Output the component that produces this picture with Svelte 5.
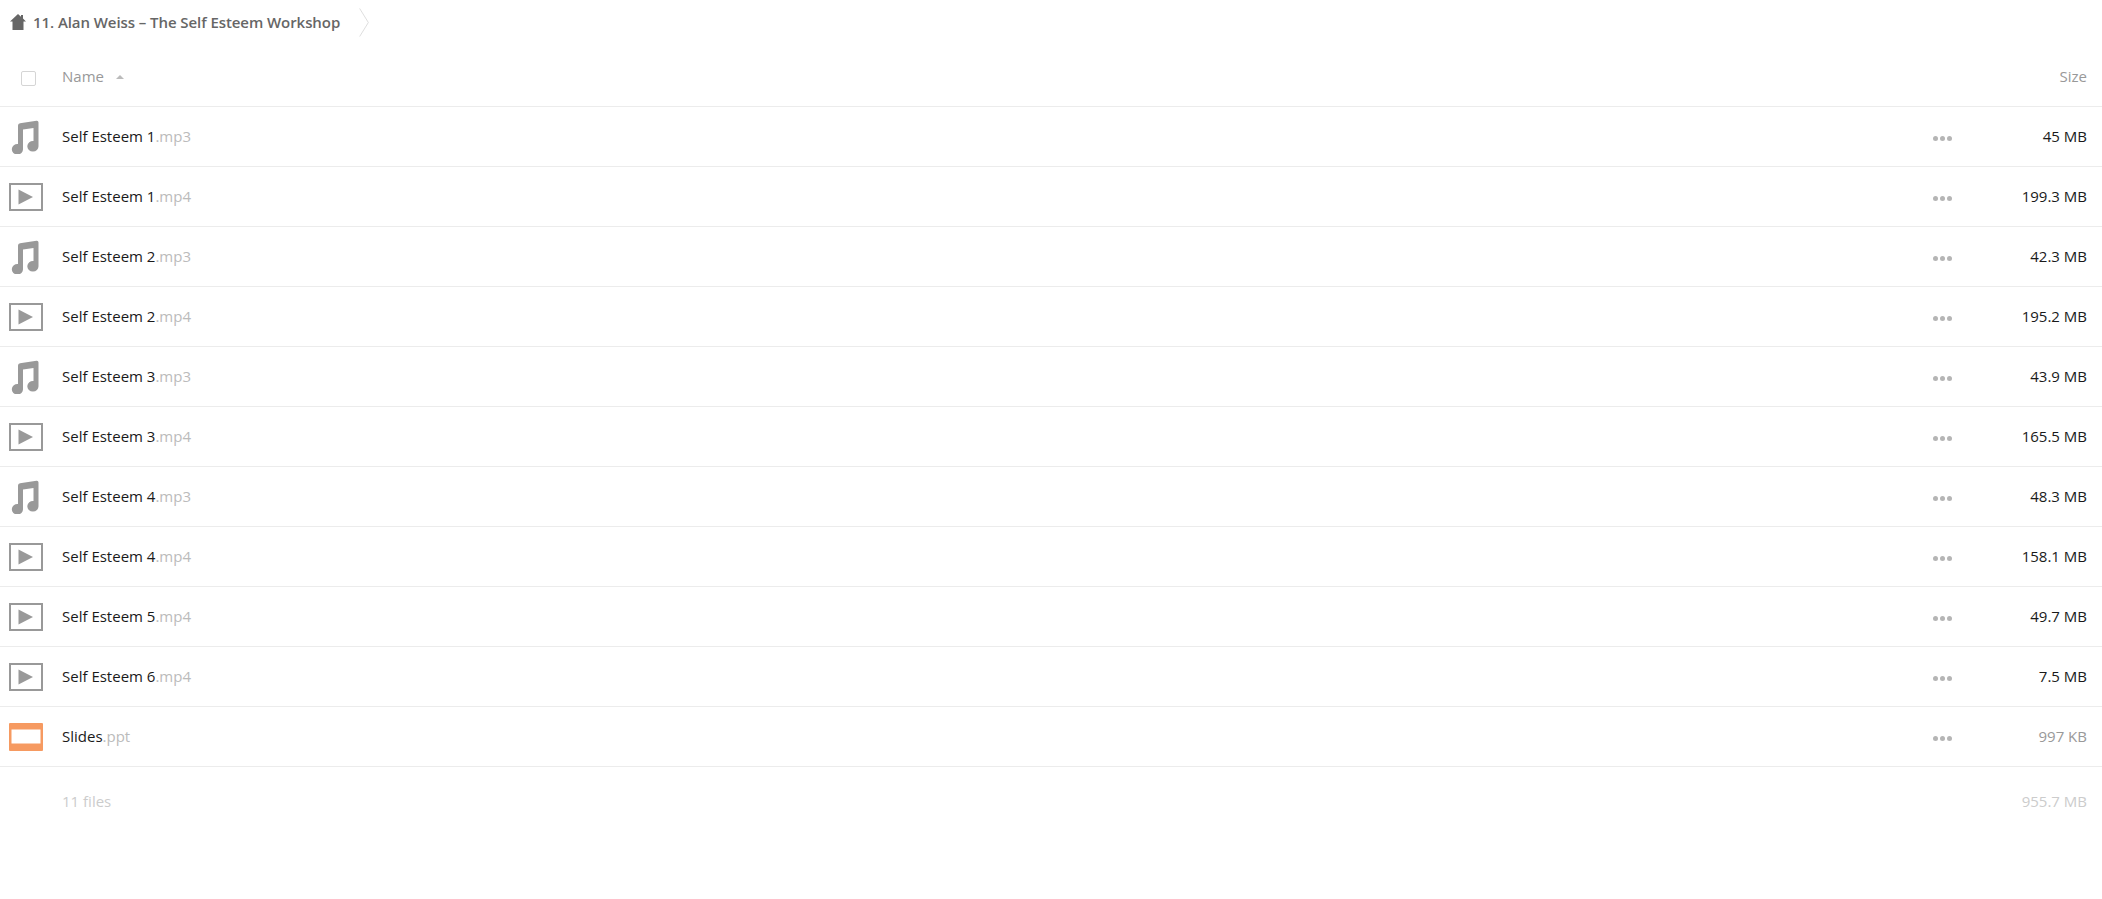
<script>
	const files = [
		{ name: 'Self Esteem 1', ext: '.mp3', size: '45 MB', type: 'audio' },
		{ name: 'Self Esteem 1', ext: '.mp4', size: '199.3 MB', type: 'video' },
		{ name: 'Self Esteem 2', ext: '.mp3', size: '42.3 MB', type: 'audio' },
		{ name: 'Self Esteem 2', ext: '.mp4', size: '195.2 MB', type: 'video' },
		{ name: 'Self Esteem 3', ext: '.mp3', size: '43.9 MB', type: 'audio' },
		{ name: 'Self Esteem 3', ext: '.mp4', size: '165.5 MB', type: 'video' },
		{ name: 'Self Esteem 4', ext: '.mp3', size: '48.3 MB', type: 'audio' },
		{ name: 'Self Esteem 4', ext: '.mp4', size: '158.1 MB', type: 'video' },
		{ name: 'Self Esteem 5', ext: '.mp4', size: '49.7 MB', type: 'video' },
		{ name: 'Self Esteem 6', ext: '.mp4', size: '7.5 MB', type: 'video' },
		{ name: 'Slides', ext: '.ppt', size: '997 KB', type: 'slides', muted: true }
	];
</script>

<div class="page">
	<div class="crumbs">
		<svg class="home" viewBox="0 0 16 16" width="16" height="16">
			<path d="M8 0 L11 2.7 L11 1 L13 1 L13 4.5 L16 7.5 L13.5 7.5 L13.5 16 L2.5 16 L2.5 7.5 L0 7.5 Z" fill="#666" />
		</svg>
		<span class="crumb">11. Alan Weiss – The Self Esteem Workshop</span>
		<svg class="chevron" viewBox="0 0 10 30" width="10" height="29">
			<path d="M0.5 0.5 L9.5 15 L0.5 29.5" fill="none" stroke="#ddd" />
		</svg>
	</div>

	<div class="row head">
		<div class="icon"><span class="check"></span></div>
		<div class="name">Name <span class="caret"></span></div>
		<div class="size">Size</div>
	</div>

	{#each files as file}
		<div class="row file">
			<div class="icon">
				{#if file.type === 'audio'}
					<svg viewBox="0 0 30 34" width="30" height="34">
						<path d="M9 5.5 Q9 3.6 11 3.3 L27.5 0.8 Q29.5 0.6 29.5 2.6 L29.5 26 A5.6 5.3 0 1 1 24.5 21 L24.5 8 L14 9.5 L14 29 A5.6 5.3 0 1 1 9 24 Z" fill="#999" />
					</svg>
				{:else if file.type === 'video'}
					<svg viewBox="0 0 34 28" width="34" height="28">
						<rect x="1" y="1" width="32" height="26" fill="#fff" stroke="#999" stroke-width="2" />
						<path d="M9.5 6.5 L24 14 L9.5 21.5 Z" fill="#999" />
					</svg>
				{:else}
					<svg viewBox="0 0 34 28" width="34" height="28">
						<rect width="34" height="28" rx="1" fill="#f69a61" />
						<rect x="2.5" y="6.5" width="29" height="14" fill="#fff" />
					</svg>
				{/if}
			</div>
			<div class="name"><span class="base">{file.name}</span><span class="ext">{file.ext}</span></div>
			<div class="dots"><i></i><i></i><i></i></div>
			<div class="size" class:muted={file.muted}>{file.size}</div>
		</div>
	{/each}

	<div class="row total">
		<div class="icon"></div>
		<div class="name">11 files</div>
		<div class="size">955.7 MB</div>
	</div>
</div>

<style>
	:global(body) {
		margin: 0;
		background: #fff;
	}
	.page {
		font-family: 'Open Sans', sans-serif;
		font-size: 15px;
		color: #1a1a1a;
		height: 899px;
		overflow: hidden;
	}
	.crumbs {
		display: flex;
		align-items: center;
		height: 44px;
		padding-left: 10px;
	}
	.home {
		margin-right: 7px;
	}
	.crumb {
		font-weight: 600;
		color: #666;
		letter-spacing: -0.07px;
	}
	.chevron {
		margin-left: 19px;
	}
	.row {
		display: flex;
		align-items: center;
		padding-right: 15px;
		border-bottom: 1px solid #ececec;
		box-sizing: border-box;
	}
	.head {
		height: 63px;
		padding-top: 3px;
		color: #999;
	}
	.file {
		height: 60px;
	}
	.total {
		height: 70px;
		border-bottom: 0;
		color: #ccc;
	}
	.icon {
		width: 62px;
		padding-left: 9px;
		box-sizing: border-box;
		display: flex;
		align-items: center;
		flex: none;
	}
	.icon svg {
		display: block;
	}
	.check {
		width: 13px;
		height: 13px;
		margin: 4px 0 0 12px;
		border: 1px solid #d5d5d5;
		border-radius: 2px;
	}
	.name {
		flex: 1;
		min-width: 0;
		padding-bottom: 2px;
	}
	.caret {
		display: inline-block;
		width: 0;
		height: 0;
		margin: 0 0 3px 8px;
		border-left: 4px solid transparent;
		border-right: 4px solid transparent;
		border-bottom: 4px solid #bbb;
	}
	.ext {
		color: #bbb;
	}
	.dots {
		display: flex;
		gap: 2px;
		margin-top: 4px;
		margin-right: 35px;
	}
	.dots i {
		width: 5px;
		height: 5px;
		border-radius: 50%;
		background: #b5b5b5;
	}
	.size {
		width: 100px;
		text-align: right;
		flex: none;
		padding-bottom: 2px;
	}
	.muted {
		color: #999;
	}
	.head .size {
		color: #999;
	}
	.total .size {
		color: #ccc;
	}
</style>
